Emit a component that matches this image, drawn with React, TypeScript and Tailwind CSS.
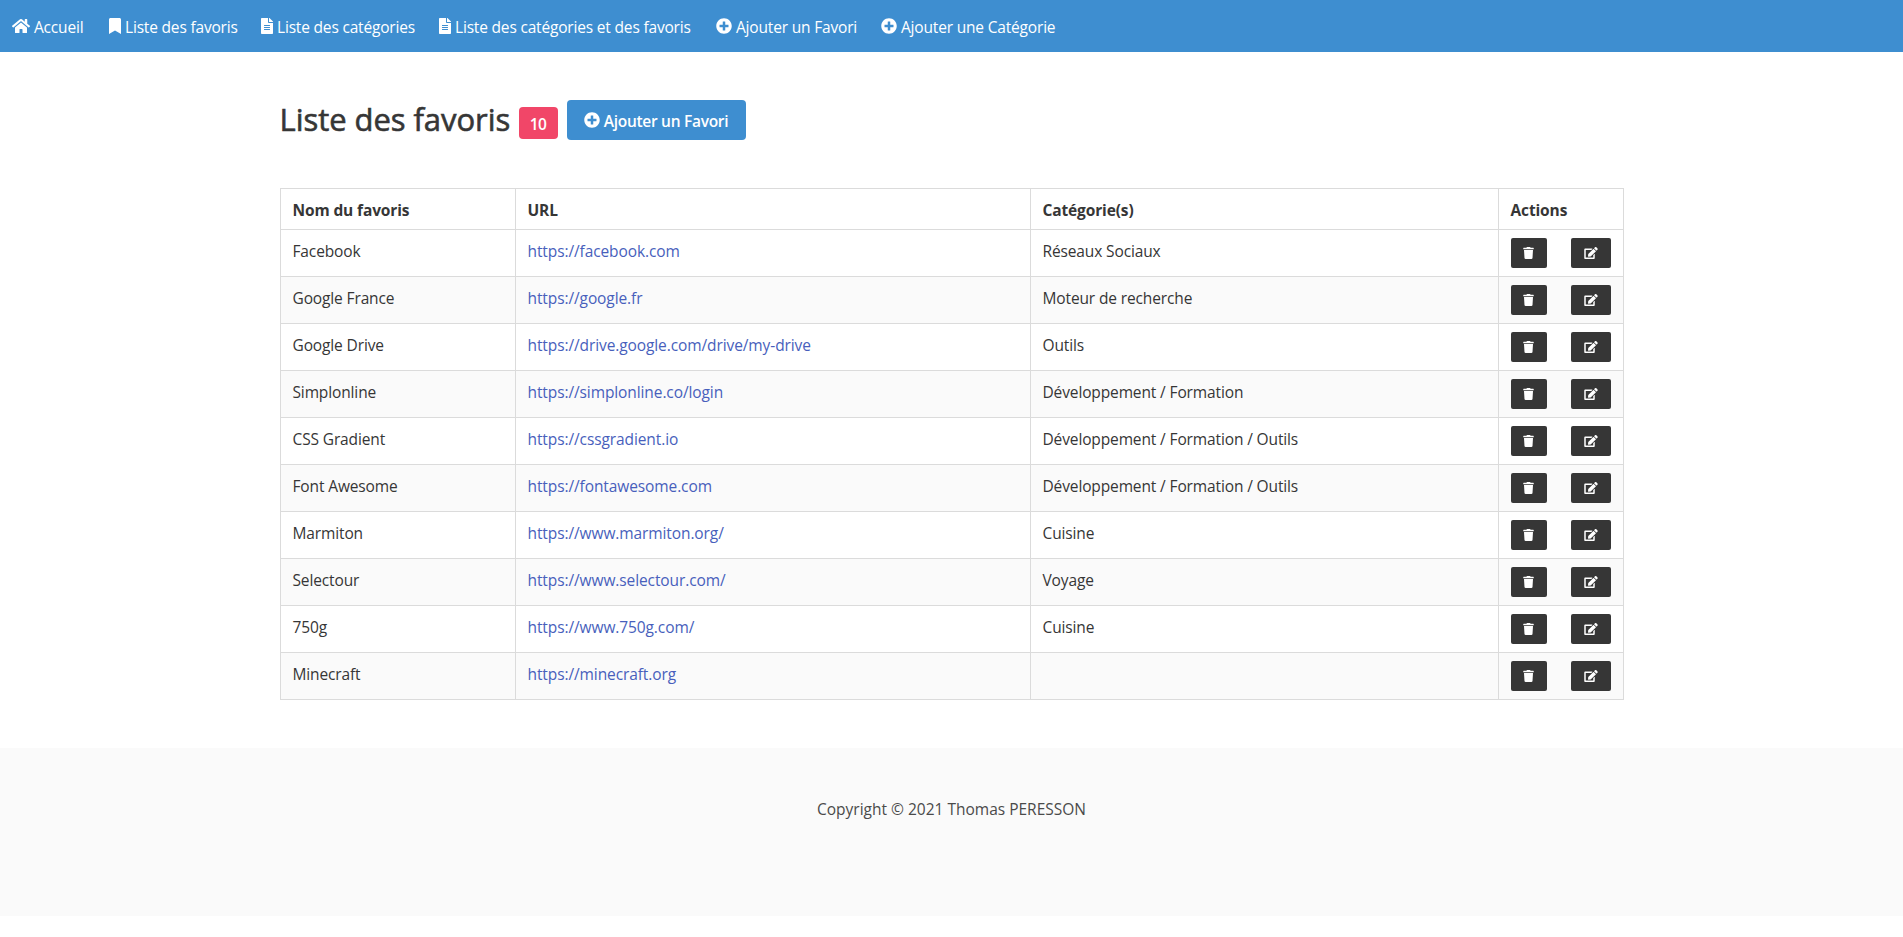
import type { IconType } from "react-icons";
import { FaBookmark, FaEdit, FaFileAlt, FaHome, FaPlusCircle, FaTrash } from "react-icons/fa";

type NavItem = { label: string; icon: IconType; iconWidth: string; width: string };

const navItems: NavItem[] = [
  { label: "Accueil", icon: FaHome, iconWidth: "w-[18px]", width: "w-[97px]" },
  { label: "Liste des favoris", icon: FaBookmark, iconWidth: "w-3", width: "w-[152px]" },
  { label: "Liste des catégories", icon: FaFileAlt, iconWidth: "w-3", width: "w-[178px]" },
  { label: "Liste des catégories et des favoris", icon: FaFileAlt, iconWidth: "w-3", width: "w-[277px]" },
  { label: "Ajouter un Favori", icon: FaPlusCircle, iconWidth: "w-4", width: "w-[165px]" },
  { label: "Ajouter une Catégorie", icon: FaPlusCircle, iconWidth: "w-4", width: "w-[200px]" },
];

const favoris = [
  { nom: "Facebook", url: "https://facebook.com", categories: "Réseaux Sociaux" },
  { nom: "Google France", url: "https://google.fr", categories: "Moteur de recherche" },
  { nom: "Google Drive", url: "https://drive.google.com/drive/my-drive", categories: "Outils" },
  { nom: "Simplonline", url: "https://simplonline.co/login", categories: "Développement / Formation" },
  { nom: "CSS Gradient", url: "https://cssgradient.io", categories: "Développement / Formation / Outils" },
  { nom: "Font Awesome", url: "https://fontawesome.com", categories: "Développement / Formation / Outils" },
  { nom: "Marmiton", url: "https://www.marmiton.org/", categories: "Cuisine" },
  { nom: "Selectour", url: "https://www.selectour.com/", categories: "Voyage" },
  { nom: "750g", url: "https://www.750g.com/", categories: "Cuisine" },
  { nom: "Minecraft", url: "https://minecraft.org", categories: "" },
];

function Navbar() {
  return (
    <nav className="flex h-[52px] bg-[#3e8ed0] tracking-[-0.18px] text-white">
      {navItems.map(({ label, icon: Icon, iconWidth, width }) => (
        <a key={label} href="#" className={`${width} flex shrink-0 items-center gap-1 whitespace-nowrap pl-3`}>
          <Icon className={`${iconWidth} h-4 shrink-0`} />
          <span className="pt-px">{label}</span>
        </a>
      ))}
    </nav>
  );
}

function FavorisTable() {
  return (
    <table className="w-[1343px] table-fixed border-collapse tracking-[-0.13px] text-[#363636]">
      <colgroup>
        <col className="w-[235px]" />
        <col className="w-[515px]" />
        <col className="w-[468px]" />
        <col className="w-[125px]" />
      </colgroup>
      <thead>
        <tr className="h-[41px] text-left">
          {["Nom du favoris", "URL", "Catégorie(s)", "Actions"].map((title) => (
            <th key={title} className="border border-[#dbdbdb] px-3 pb-[7px] pt-[9px] font-bold">{title}</th>
          ))}
        </tr>
      </thead>
      <tbody>
        {favoris.map((favori) => (
          <tr key={favori.nom} className="h-[47px] align-top even:bg-[#fafafa]">
            <td className="border border-[#dbdbdb] px-3 pb-[7px] pt-[9px]">{favori.nom}</td>
            <td className="border border-[#dbdbdb] px-3 pb-[7px] pt-[9px]">
              <a href={favori.url} className="tracking-[-0.1px] text-[#485fbc]">{favori.url}</a>
            </td>
            <td className="border border-[#dbdbdb] px-3 pb-[7px] pt-[9px]">{favori.categories}</td>
            <td className="border border-[#dbdbdb] px-3 py-2">
              <div className="flex gap-6">
                <button aria-label="Supprimer" className="flex h-[30px] w-9 shrink-0 items-center justify-center rounded-xs bg-[#363636] text-white">
                  <FaTrash className="h-3 w-[11px]" />
                </button>
                <button aria-label="Modifier" className="flex h-[30px] w-10 shrink-0 items-center justify-center rounded-xs bg-[#363636] text-white">
                  <FaEdit className="h-3 w-[14px]" />
                </button>
              </div>
            </td>
          </tr>
        ))}
      </tbody>
    </table>
  );
}

export default function App() {
  return (
    <div className="min-h-[937px] bg-white font-['Open_Sans',sans-serif] text-[15.5px] leading-6 text-[#4a4a4a]">
      <Navbar />

      <section className="px-6 py-12">
        <div className="mx-auto w-[1344px]">
          <div className="mb-12 flex h-10 items-center">
            <h1 className="mb-0.5 w-[239px] whitespace-nowrap text-[31px] font-normal leading-9 tracking-[-0.05px] text-[#363636] [-webkit-text-stroke:0.6px]">
              Liste des favoris
            </h1>
            <span className="mt-[6px] flex h-8 w-[39px] items-center justify-center rounded bg-[#f14668] pt-px font-semibold tracking-[-0.6px] text-white">10</span>
            <a href="#" className="ml-[9px] flex h-10 w-[179px] items-center justify-center gap-1 whitespace-nowrap rounded bg-[#3e8ed0] font-semibold tracking-[-0.28px] text-white">
              <FaPlusCircle className="h-4 w-4 shrink-0" />
              <span className="pt-px">Ajouter un Favori</span>
            </a>
          </div>

          <FavorisTable />
        </div>
      </section>

      <footer className="h-[168px] bg-[#fafafa] px-6 pt-[49px] text-center">
        <p>Copyright © 2021 Thomas PERESSON</p>
      </footer>
    </div>
  );
}
